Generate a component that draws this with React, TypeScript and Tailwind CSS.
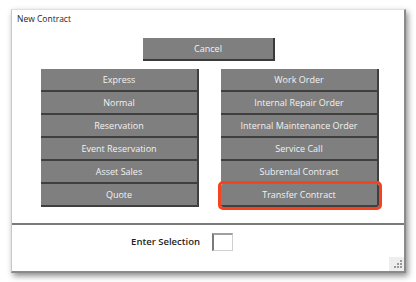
import React, { useState } from 'react';

const LEFT_OPTIONS = ['Express', 'Normal', 'Reservation', 'Event Reservation', 'Asset Sales', 'Quote'];
const RIGHT_OPTIONS = [
  'Work Order',
  'Internal Repair Order',
  'Internal Maintenance Order',
  'Service Call',
  'Subrental Contract',
  'Transfer Contract',
];

function OptionButton({ label, highlighted }: { label: string; highlighted?: boolean }) {
  return (
    <button
      className={`h-[23px] w-full bg-[#7f7f7f] text-[#f2f2f2] text-[9px] leading-none border-r-2 border-b-2 border-[#3f3f3f] ${
        highlighted ? 'outline-[3px] outline-solid outline-[#f5421f] outline-offset-[0px] rounded-[2px]' : ''
      }`}
    >
      {label}
    </button>
  );
}

export default function App() {
  const [selection, setSelection] = useState('');

  return (
    <div className="w-[416px] h-[282px] bg-white pt-[9px] pl-[11px]" style={{ fontFamily: '"Open Sans", "Noto Sans", sans-serif' }}>
      {/* Dialog window */}
      <div className="relative w-[395px] h-[264px] bg-white border-r-2 border-b-2 border-[#8a8a8a] border-l border-t border-l-[#c8c8c8] border-t-[#e0e0e0] shadow-[2px_3px_6px_rgba(0,0,0,0.45)] flex flex-col">
        <div className="h-[18px] pl-[5px] text-[8.5px] leading-[18px] text-[#1e1e1e]">New Contract</div>

        <button className="mt-[10px] ml-[131px] w-[132px] h-[23px] bg-[#7f7f7f] text-[#f2f2f2] text-[9px] border-r-2 border-b-2 border-[#3a3a3a]">
          Cancel
        </button>

        {/* Contract type grid */}
        <div className="mt-[8px] ml-[29px] w-[338px] grid grid-cols-2 gap-x-[22px]">
          <div className="flex flex-col">
            {LEFT_OPTIONS.map((o) => (
              <OptionButton key={o} label={o} />
            ))}
          </div>
          <div className="flex flex-col">
            {RIGHT_OPTIONS.map((o) => (
              <OptionButton key={o} label={o} highlighted={o === 'Transfer Contract'} />
            ))}
          </div>
        </div>

        <div className="mt-[16px] h-[2px] bg-[#7a7a7a]" />

        {/* Selection entry */}
        <div className="flex items-center mt-[8px] h-[18px]">
          <span className="w-[188px] text-right text-[9.5px] font-semibold text-[#1e1e1e]">Enter Selection</span>
          <input
            value={selection}
            onChange={(e) => setSelection(e.target.value)}
            className="ml-[12px] w-[21px] h-[18px] bg-white border border-[#d0d0d0] border-l-2 border-t-2 border-l-[#7a7a7a] border-t-[#a0a0a0] outline-none text-[10px] px-[1px]"
          />
        </div>

        {/* Resize grip */}
        <div className="absolute right-0 bottom-0 w-[15px] h-[14px] bg-[#eeeeee]">
          <svg width="15" height="14" viewBox="0 0 15 14">
            <g fill="#9a9a9a">
              <rect x="11" y="3" width="2" height="2" />
              <rect x="8" y="6" width="2" height="2" />
              <rect x="11" y="6" width="2" height="2" />
              <rect x="5" y="9" width="2" height="2" />
              <rect x="8" y="9" width="2" height="2" />
              <rect x="11" y="9" width="2" height="2" />
            </g>
          </svg>
        </div>
      </div>
    </div>
  );
}
